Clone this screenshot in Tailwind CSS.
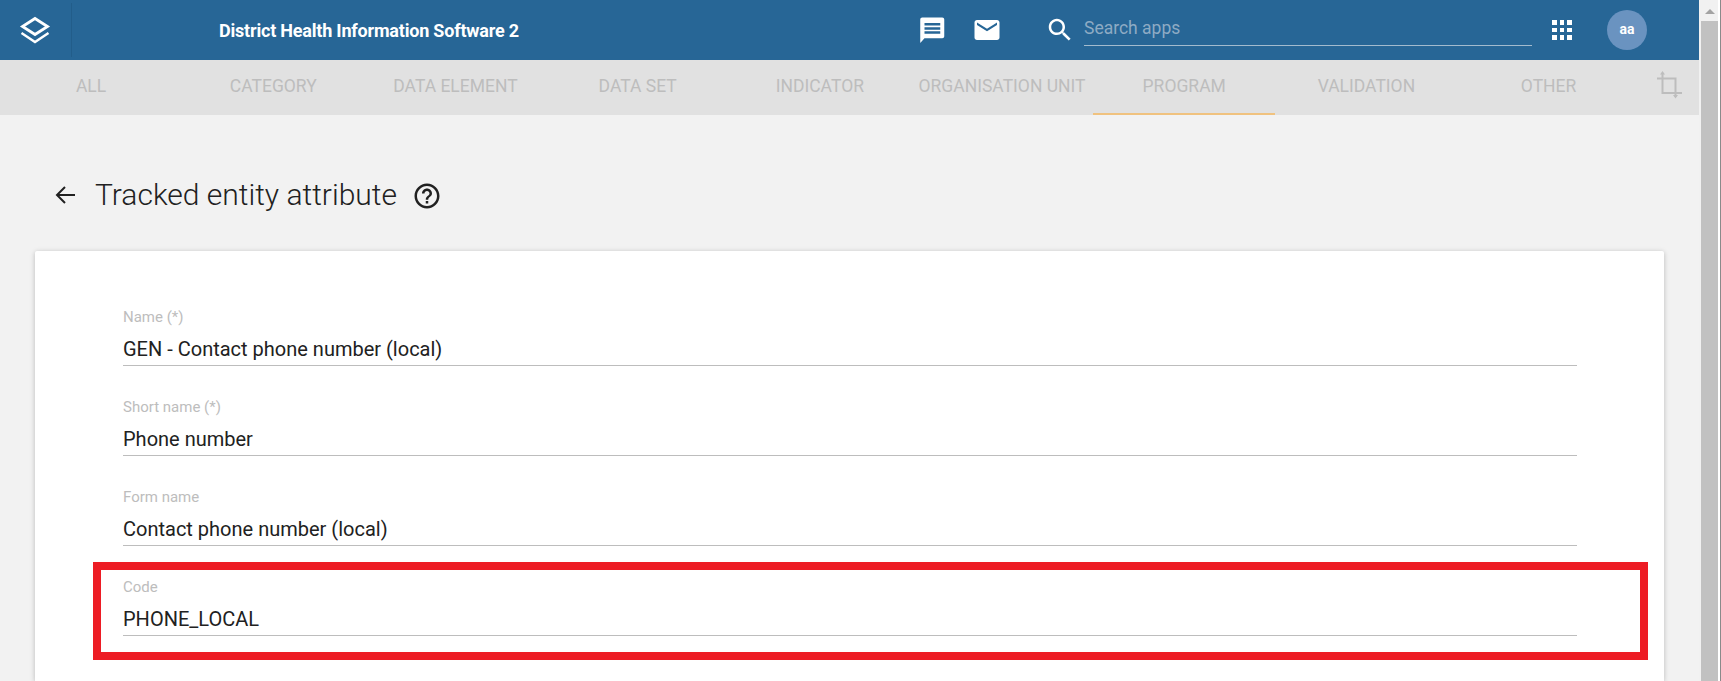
<!doctype html>
<html>
<head>
<meta charset="utf-8">
<script src="https://cdn.jsdelivr.net/npm/@tailwindcss/browser@4"></script>
</head>
<body class="m-0 overflow-hidden font-['Roboto',sans-serif]">
<div class="relative flex h-[681px] w-[1721px] overflow-hidden bg-white">
  <main class="flex h-full w-[1699px] flex-col bg-[#f2f2f2]">
    <header class="flex h-[60px] shrink-0 items-center bg-[#276696] text-white">
      <div class="flex h-[54px] w-[72px] shrink-0 items-center justify-center border-r border-[#225d8a] pr-[2px]">
        <svg width="32" height="28" viewBox="0 0 32 28" fill="none" stroke="white" stroke-width="2.400"><path d="M16 2.500 L28.500 10.500 L16 18.500 L3.500 10.500 Z" stroke-width="2.800"/><path d="M2.500 17 L16 26 L29.500 17"/></svg>
      </div>
      <div class="mt-[2px] ml-[147px] w-[698px] text-[18px] leading-none font-bold tracking-[-0.2px]">District Health Information Software 2</div>
      <svg class="h-[30px] w-[30px]" viewBox="0 0 24 24" fill="white"><path d="M2.600 3.600c0-.9.7-1.600 1.600-1.600h16c.9 0 1.600.7 1.600 1.600v13.300c0 .9-.7 1.600-1.600 1.600H6l-3.400 3.900z"/><path d="M6 6.400h12.600v2H6zM6 9.700h12.600v2H6zM6 13h12.600v2H6z" fill="#276696"/></svg>
      <svg class="ml-[25px] h-[30px] w-[30px]" viewBox="0 0 24 24" fill="white"><path d="M20 4H4c-1.100 0-2 .9-2 2v12c0 1.100.9 2 2 2h16c1.100 0 2-.9 2-2V6c0-1.100-.9-2-2-2zm0 4l-8 5-8-5V6l8 5 8-5v2z"/></svg>
      <svg class="ml-[43px] h-[30px] w-[30px]" viewBox="0 0 24 24" fill="white"><path d="M15.500 14h-.79l-.28-.27C15.410 12.590 16 11.110 16 9.500 16 5.910 13.090 3 9.500 3S3 5.910 3 9.500 5.910 16 9.500 16c1.610 0 3.090-.59 4.230-1.570l.27.28v.79l5 4.990L20.490 19l-4.990-5zm-6 0C7.010 14 5 11.990 5 9.500S7.010 5 9.500 5 14 7.010 14 9.500 11.990 14 9.500 14z"/></svg>
      <div class="mb-[8px] ml-[9px] flex h-[40px] w-[448px] items-center border-b border-[#a3bbce] pt-[6px] text-[17.500px] text-[#8eabc4]">Search apps</div>
      <div class="ml-[20px] grid h-[20px] w-[20px] grid-cols-3 gap-[3px]">
        <i class="bg-white"></i><i class="bg-white"></i><i class="bg-white"></i><i class="bg-white"></i><i class="bg-white"></i><i class="bg-white"></i><i class="bg-white"></i><i class="bg-white"></i><i class="bg-white"></i>
      </div>
      <div class="ml-[35px] flex h-[40px] w-[40px] items-center justify-center rounded-full bg-[#6a93c0] pb-[1px] text-[14px] font-bold">aa</div>
    </header>

    <nav class="relative flex h-[55px] shrink-0 bg-[#e1e1e1] text-[17.500px] text-[#bdbdbd] uppercase">
      <div class="flex w-[182.200px] items-center justify-center pb-[2px]">All</div>
      <div class="flex w-[182.200px] items-center justify-center pb-[2px]">Category</div>
      <div class="flex w-[182.200px] items-center justify-center pb-[2px]">Data element</div>
      <div class="flex w-[182.200px] items-center justify-center pb-[2px]">Data set</div>
      <div class="flex w-[182.200px] items-center justify-center pb-[2px]">Indicator</div>
      <div class="flex w-[182.200px] items-center justify-center pb-[2px] whitespace-nowrap">Organisation unit</div>
      <div class="flex w-[182.200px] items-center justify-center border-b-2 border-[#f0c27f]">Program</div>
      <div class="flex w-[182.200px] items-center justify-center pb-[2px]">Validation</div>
      <div class="flex w-[182.200px] items-center justify-center pb-[2px]">Other</div>
      <svg class="ml-[16px] mt-[10px] h-[29px] w-[28px]" viewBox="0 0 28 29" fill="none" stroke="#bdbdbd" stroke-width="2"><path d="M6.500 3V23H26"/><path d="M1 8.500H19.500V27"/><path d="M6.500 1 4 4.500H9zM19.500 28.500 17 25H22z" fill="#bdbdbd" stroke="none"/></svg>
    </nav>

    <section class="flex min-h-0 flex-1 flex-col pt-[55px]">
      <div class="flex h-[50px] shrink-0 items-center pl-[55px] text-[#212121]">
        <svg class="h-[20px] w-[20px]" viewBox="0 0 20 20" fill="none" stroke="#212121" stroke-width="2"><path d="M20 10H2M10 2 2 10l8 8"/></svg>
        <h1 class="ml-[20px] text-[30px] leading-none font-light">Tracked entity attribute</h1>
        <svg class="ml-[15px] mt-[2px] h-[30px] w-[30px]" viewBox="0 0 24 24" fill="#212121"><path d="M11 18h2v-2h-2v2zm1-16C6.480 2 2 6.480 2 12s4.480 10 10 10 10-4.480 10-10S17.520 2 12 2zm0 18c-4.410 0-8-3.590-8-8s3.590-8 8-8 8 3.590 8 8-3.590 8-8 8zm0-14c-2.210 0-4 1.790-4 4h2c0-1.100.9-2 2-2s2 .9 2 2c0 2-3 1.750-3 5h2c0-2.250 3-2.500 3-5 0-2.210-1.790-4-4-4z"/></svg>
      </div>
      <div class="mt-[31px] ml-[35px] flex w-[1629px] flex-1 flex-col gap-[31px] rounded-t-[2px] bg-white pt-[56px] pr-[87px] pl-[88px] shadow-[0_1px_6px_rgba(0,0,0,0.12),0_1px_4px_rgba(0,0,0,0.12)]">
        <div class="h-[59px] border-b border-[#bdbdbd]">
          <div class="text-[15px] leading-[20px] text-[#bdbdbd]">Name (*)</div>
          <div class="mt-[10px] text-[20px] leading-[24px] text-[#212121]">GEN - Contact phone number (local)</div>
        </div>
        <div class="h-[59px] border-b border-[#bdbdbd]">
          <div class="text-[15px] leading-[20px] text-[#bdbdbd]">Short name (*)</div>
          <div class="mt-[10px] text-[20px] leading-[24px] text-[#212121]">Phone number</div>
        </div>
        <div class="h-[59px] border-b border-[#bdbdbd]">
          <div class="text-[15px] leading-[20px] text-[#bdbdbd]">Form name</div>
          <div class="mt-[10px] text-[20px] leading-[24px] text-[#212121]">Contact phone number (local)</div>
        </div>
        <div class="h-[59px] border-b border-[#bdbdbd]">
          <div class="text-[15px] leading-[20px] text-[#bdbdbd]">Code</div>
          <div class="mt-[10px] text-[20px] leading-[24px] text-[#212121]">PHONE_LOCAL</div>
        </div>
      </div>
    </section>
  </main>

  <aside class="flex h-full w-[22px] bg-[#f1f1f1]">
    <div class="ml-[2px] flex w-[17px] flex-col items-center">
      <div class="mt-[9px] h-0 w-0 border-x-[5px] border-b-[5px] border-x-transparent border-b-[#a3a3a3]"></div>
      <div class="mt-[7px] w-full flex-1 bg-[#c1c1c1]"></div>
    </div>
    <div class="w-[2px] bg-white"></div>
    <div class="w-px bg-[#8a8a8a]"></div>
  </aside>

  <div class="absolute top-[562px] left-[93px] h-[98px] w-[1555px] border-[8px] border-[#ed1c24]"></div>
</div>
</body>
</html>
